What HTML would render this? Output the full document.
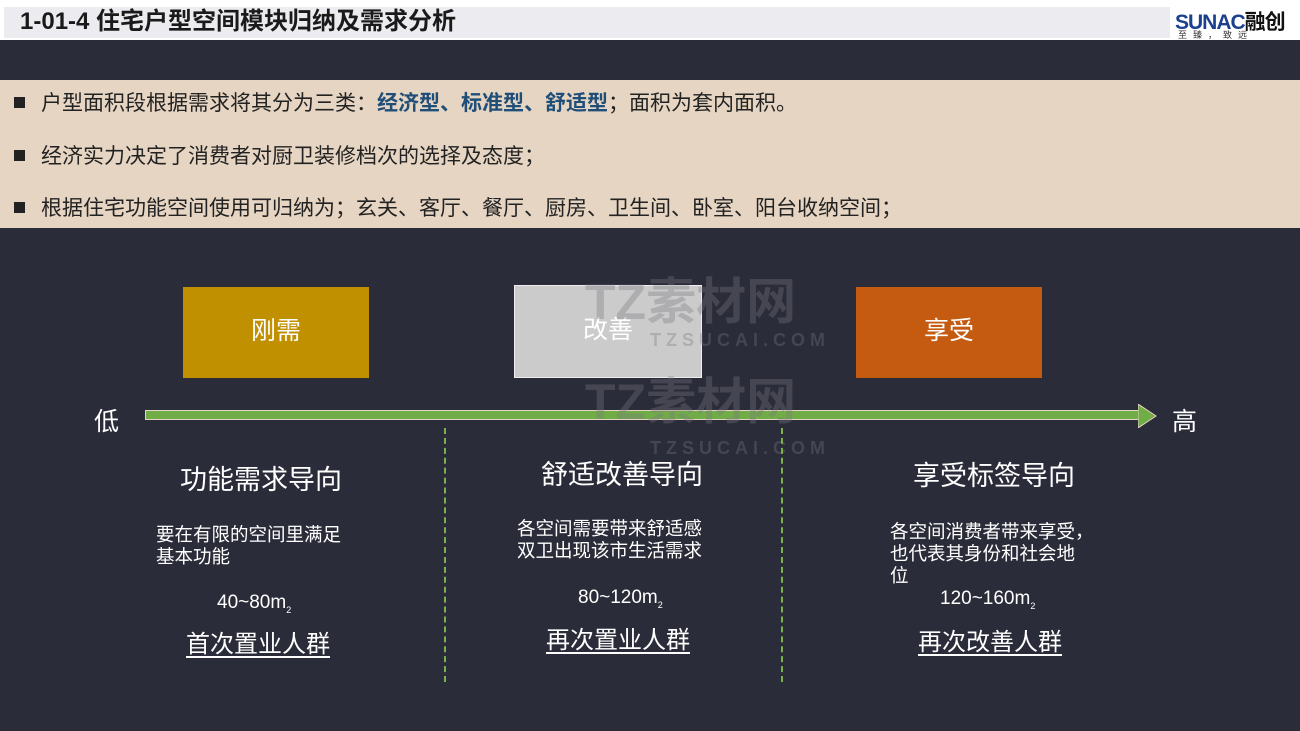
<!DOCTYPE html>
<html><head><meta charset="utf-8"><style>
body{margin:0;width:1300px;height:731px;background:#2b2c39;position:relative;overflow:hidden;font-family:"Liberation Sans","Noto Sans CJK SC",sans-serif;color:#fff}
.a{position:absolute}
.top{left:0;top:0;width:1300px;height:40px;background:#fff}
.tbar{left:4px;top:7px;width:1166px;height:31px;background:#ececf0}
.title{left:20px;top:6px;font-size:24px;font-weight:bold;color:#1a1a1a;line-height:31px}
.band{left:0;top:80px;width:1300px;height:148px;background:#e6d5c2}
.li{left:14px;font-size:21px;color:#222;line-height:26px}
.li b{color:#1f4e79}
.sq{display:inline-block;width:11px;height:11px;background:#222;margin-right:16px;vertical-align:2px}
.box{width:186px;height:91px;font-size:25px;text-align:center;line-height:88px}
.h{font-size:27px;text-align:center}
.p{font-size:18.5px;line-height:22px}
.u{font-size:24px;text-decoration:underline;text-underline-offset:4px}
.dash{width:0;border-left:2px dashed #7bb24c;top:428px;height:254px}
.wm{color:rgba(120,120,130,0.35);font-weight:bold}
</style></head><body>
<div class="a top"></div><div class="a tbar"></div>
<div class="a title">1-01-4 住宅户型空间模块归纳及需求分析</div>
<div class="a" style="left:1175px;top:6px;font-size:21px;font-weight:bold;color:#1c3f8f;letter-spacing:-1px">SUNAC<span style="color:#111">融创</span></div>
<div class="a" style="left:1178px;top:28px;font-size:9px;color:#333;letter-spacing:6px">至臻，致远</div>
<div class="a band"></div>
<div class="a li" style="top:91px"><span class="sq"></span>户型面积段根据需求将其分为三类：<b>经济型、标准型、舒适型</b>；面积为套内面积。</div>
<div class="a li" style="top:144px"><span class="sq"></span>经济实力决定了消费者对厨卫装修档次的选择及态度；</div>
<div class="a li" style="top:196px"><span class="sq"></span>根据住宅功能空间使用可归纳为；玄关、客厅、餐厅、厨房、卫生间、卧室、阳台收纳空间；</div>
<div class="a box" style="left:183px;top:287px;background:#c09000">刚需</div>
<div class="a box" style="left:514px;top:285px;background:#cbcbcb;border:1px solid #eee">改善</div>
<div class="a box" style="left:856px;top:287px;background:#c55a11">享受</div>
<div class="a" style="left:94px;top:402px;font-size:25px">低</div>
<div class="a" style="left:1172px;top:402px;font-size:25px">高</div>
<div class="a" style="left:145px;top:410px;width:998px;height:10px;background:#70ad47;border:1px solid #e6d5c2;box-sizing:border-box"></div>
<svg class="a" style="left:1138px;top:404px" width="20" height="24"><polygon points="0,0 18,12 0,24" fill="#70ad47" stroke="#e6d5c2" stroke-width="1"/></svg>
<div class="a wm" style="left:585px;top:262px;font-size:50px">TZ素材网</div>
<div class="a wm" style="left:585px;top:362px;font-size:50px">TZ素材网</div>
<div class="a wm" style="left:650px;top:330px;font-size:18px;letter-spacing:5px">TZSUCAI.COM</div>
<div class="a wm" style="left:650px;top:438px;font-size:18px;letter-spacing:5px">TZSUCAI.COM</div>
<div class="a dash" style="left:444px"></div>
<div class="a dash" style="left:781px"></div>
<div class="a h" style="left:161px;top:458px;width:200px">功能需求导向</div>
<div class="a h" style="left:522px;top:453px;width:200px">舒适改善导向</div>
<div class="a h" style="left:894px;top:454px;width:200px">享受标签导向</div>
<div class="a p" style="left:156px;top:524px">要在有限的空间里满足<br>基本功能</div>
<div class="a p" style="left:517px;top:518px">各空间需要带来舒适感<br>双卫出现该市生活需求</div>
<div class="a p" style="left:890px;top:521px">各空间消费者带来享受，<br>也代表其身份和社会地<br>位</div>
<div class="a p" style="left:217px;top:592px;font-size:19px">40~80m<sub style="font-size:9px">2</sub></div>
<div class="a p" style="left:578px;top:587px;font-size:19px">80~120m<sub style="font-size:9px">2</sub></div>
<div class="a p" style="left:940px;top:588px;font-size:19px">120~160m<sub style="font-size:9px">2</sub></div>
<div class="a u" style="left:186px;top:624px">首次置业人群</div>
<div class="a u" style="left:546px;top:620px">再次置业人群</div>
<div class="a u" style="left:918px;top:622px">再次改善人群</div>
</body></html>
